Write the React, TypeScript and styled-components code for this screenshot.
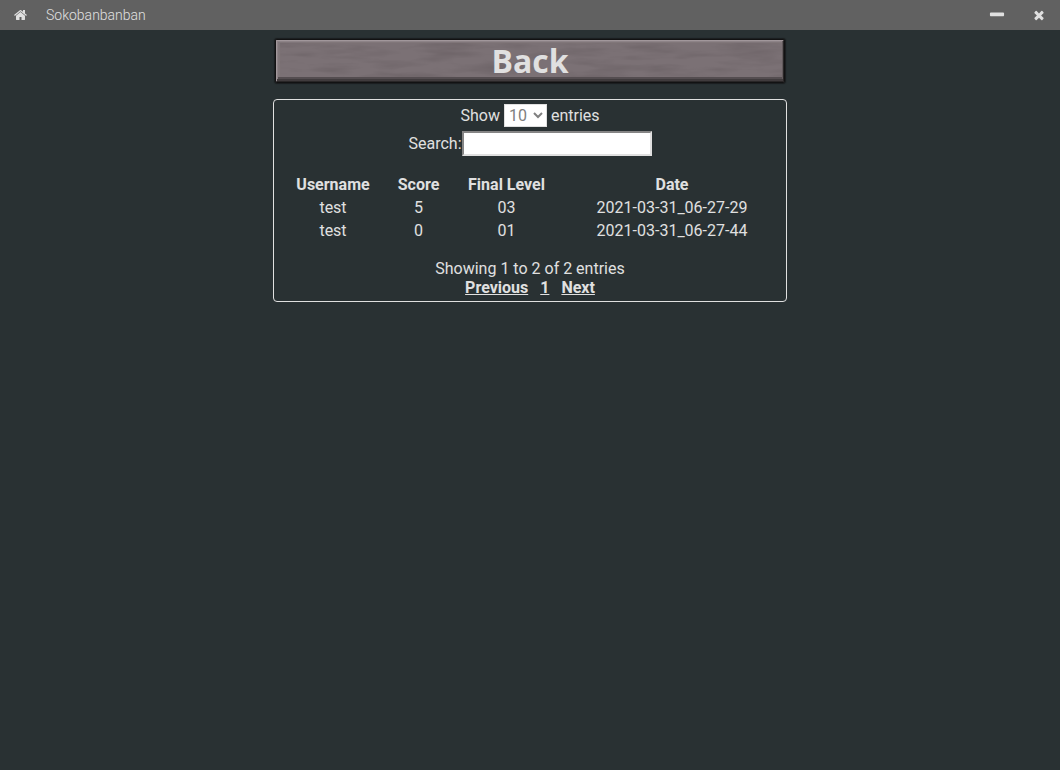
import React from "react";
import styled, { createGlobalStyle } from "styled-components";

const GlobalStyle = createGlobalStyle`
  * { box-sizing: border-box; }
  body {
    margin: 0;
    background: #293133;
    color: #e0e0e0;
    font: 16px/19px Roboto, sans-serif;
  }
`;

const TitleBar = styled.header`
  display: flex;
  align-items: center;
  height: 30px;
  background: #616161;
`;

const AppTitle = styled.h1`
  flex: 1;
  margin: 0;
  padding-left: 4px;
  font-size: 14px;
  font-weight: 300;
  line-height: 30px;
`;

const BarButton = styled.button`
  display: flex;
  align-items: center;
  justify-content: center;
  width: 42px;
  height: 30px;
  padding: 0;
  border: 0;
  background: none;
  color: inherit;
`;

const Main = styled.main`
  display: flex;
  flex-direction: column;
  align-items: center;
  gap: 16px;
  padding: 9px 16px;
`;

const WoodButton = styled.button`
  position: relative;
  width: 100%;
  max-width: 510px;
  height: 44px;
  padding: 0;
  border: 1px solid #121213;
  border-radius: 2px;
  background: #7b7175;
  box-shadow: 0 0 1px 1px #1a1d1e;
  overflow: hidden;
  color: #e0e0e0;
  font: 700 32px/42px "Open Sans", sans-serif;
`;

const Grain = styled.svg`
  position: absolute;
  inset: 0;
  width: 100%;
  height: 100%;
`;

const Bevel = styled.span`
  position: absolute;
  inset: 0;
  box-shadow:
    inset 0 -1px #292627,
    inset -1px 0 #292627,
    inset 1px 1px #a1979b,
    inset 0 -3px #403b3d,
    inset -2px 0 #625a5d,
    inset 2px 2px #8d8387,
    inset 0 -5px #544d50,
    inset 4px 3px 1px #81777b;
`;

const ButtonLabel = styled.span`
  position: relative;
`;

const Panel = styled.section`
  display: flex;
  flex-direction: column;
  align-items: center;
  width: 100%;
  max-width: 514px;
  padding: 4px 2px;
  border: 1px solid #e0e0e0;
  border-radius: 4px;
`;

const Field = styled.label`
  display: flex;
  align-items: center;
  gap: 4px;
`;

const SearchField = styled(Field)`
  gap: 0;
  margin-top: 4px;
`;

const LengthSelect = styled.select`
  width: 43px;
  height: 23px;
  padding: 0;
  border: 1px solid #e0e0e0;
  border-radius: 0;
  background: #fff;
  color: #808080;
  font: inherit;
`;

const SearchInput = styled.input`
  width: 190px;
  height: 25px;
  padding: 1px 2px;
  border: 2px solid;
  border-color: #858585 #e0e0e0 #e0e0e0 #858585;
  border-radius: 0;
  background: #fff;
  font: inherit;
`;

const ScoreTable = styled.table`
  width: 100%;
  margin: 17px 0;
  padding-left: 6px;
  border-collapse: separate;
  border-spacing: 0;
  table-layout: fixed;
  text-align: center;
`;

const Column = styled.col<{ $width?: number }>`
  width: ${({ $width }) => ($width ? `${$width}px` : "auto")};
`;

const Heading = styled.th`
  padding: 2px 0;
  font-weight: 700;
`;

const Cell = styled.td`
  padding: 2px 0;
`;

const Pager = styled.nav`
  display: flex;
  gap: 12px;
`;

const PageLink = styled.a`
  color: inherit;
  font-weight: 700;
`;

const icons = {
  home: "M1408 992v480q0 26-19 45t-45 19h-384v-384h-256v384h-384q-26 0-45-19t-19-45v-480q0-1 .5-3t.5-3l575-474 575 474q1 2 1 6zm223-69l-62 74q-8 9-21 11h-3q-13 0-21-7l-692-577-692 577q-12 8-24 7-13-2-21-11l-62-74q-8-10-7-23.5t11-21.5l719-599q32-26 76-26t76 26l244 204v-195q0-14 9-23t23-9h192q14 0 23 9t9 23v408l219 182q10 8 11 21.5t-7 23.5z",
  minus: "M1600 736v192q0 40-28 68t-68 28h-1216q-40 0-68-28t-28-68v-192q0-40 28-68t68-28h1216q40 0 68 28t28 68z",
  close: "M1490 1322q0 40-28 68l-136 136q-28 28-68 28t-68-28l-294-294-294 294q-28 28-68 28t-68-28l-136-136q-28-28-28-68t28-68l294-294-294-294q-28-28-28-68t28-68l136-136q28-28 68-28t68 28l294 294 294-294q28-28 68-28t68 28l136 136q28 28 28 68t-28 68l-294 294 294 294q28 28 28 68z",
};

function Icon({ name, size }: { name: keyof typeof icons; size: number }) {
  return (
    <svg width={size} height={size} viewBox="0 0 1792 1792" fill="currentColor" aria-hidden="true">
      <path d={icons[name]} />
    </svg>
  );
}

const scores = [
  { user: "test", score: 5, level: "03", date: "2021-03-31_06-27-29" },
  { user: "test", score: 0, level: "01", date: "2021-03-31_06-27-44" },
];

export default function App() {
  return (
    <>
      <GlobalStyle />
      <TitleBar>
        <BarButton aria-label="Home"><Icon name="home" size={14} /></BarButton>
        <AppTitle>Sokobanbanban</AppTitle>
        <BarButton aria-label="Minimize"><Icon name="minus" size={18} /></BarButton>
        <BarButton aria-label="Close"><Icon name="close" size={14} /></BarButton>
      </TitleBar>
      <Main>
        <WoodButton>
          <Grain aria-hidden="true">
            <filter id="grain" x="0" y="0" width="100%" height="100%" colorInterpolationFilters="sRGB">
              <feTurbulence type="fractalNoise" baseFrequency="0.02 0.12" numOctaves="3" seed="4" />
              <feColorMatrix values="0 0 0 0 0.2  0 0 0 0 0.17  0 0 0 0 0.18  0.35 0 0 0 -0.14" />
            </filter>
            <rect width="100%" height="100%" filter="url(#grain)" />
          </Grain>
          <Bevel />
          <ButtonLabel>Back</ButtonLabel>
        </WoodButton>
        <Panel>
          <Field>
            Show
            <LengthSelect defaultValue="10">
              <option>10</option>
              <option>25</option>
              <option>50</option>
            </LengthSelect>
            entries
          </Field>
          <SearchField>
            Search:
            <SearchInput type="search" />
          </SearchField>
          <ScoreTable>
            <colgroup>
              <Column $width={102} />
              <Column $width={69} />
              <Column $width={107} />
              <Column />
            </colgroup>
            <thead>
              <tr>
                <Heading>Username</Heading>
                <Heading>Score</Heading>
                <Heading>Final Level</Heading>
                <Heading>Date</Heading>
              </tr>
            </thead>
            <tbody>
              {scores.map((row) => (
                <tr key={row.date}>
                  <Cell>{row.user}</Cell>
                  <Cell>{row.score}</Cell>
                  <Cell>{row.level}</Cell>
                  <Cell>{row.date}</Cell>
                </tr>
              ))}
            </tbody>
          </ScoreTable>
          <div>Showing 1 to 2 of 2 entries</div>
          <Pager aria-label="Score pages">
            <PageLink href="#previous">Previous</PageLink>
            <PageLink href="#1">1</PageLink>
            <PageLink href="#next">Next</PageLink>
          </Pager>
        </Panel>
      </Main>
    </>
  );
}
